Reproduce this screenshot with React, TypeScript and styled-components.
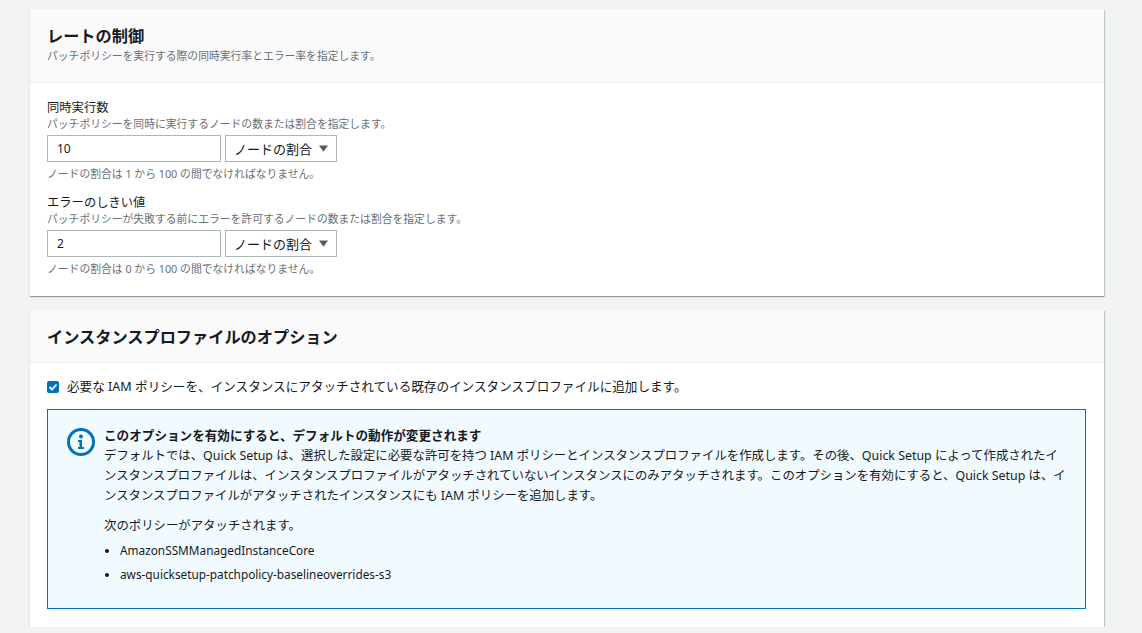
import React from "react";
import styled, { createGlobalStyle } from "styled-components";

const Global = createGlobalStyle`
  body { margin: 0; background: #f2f3f3; font-family: "Noto Sans", "Noto Sans CJK JP", sans-serif; color: #16191f; }
`;
const Page = styled.div`padding: 9px 38px 0 30px; display: flex; flex-direction: column; gap: 14px;`;
const Card = styled.div`background: #fff; box-shadow: 0 1px 1px rgba(0,28,36,.3), 1px 1px 1px rgba(0,28,36,.15);`;
const Header = styled.div<{ $h: number }>`
  background: #fafafa; border-bottom: 1px solid #eaeded; height: ${p => p.$h}px; box-sizing: border-box;
  padding: 15px 17px 0; display: flex; flex-direction: column;
`;
const Title = styled.h2`margin: 0; font-size: 16.2px; font-weight: 700; line-height: 24px;`;
const Sub = styled.div`font-size: 10.8px; color: #687078; line-height: 16px;`;
const Body = styled.div<{ $pad: string }>`padding: ${p => p.$pad}; display: flex; flex-direction: column;`;
const Label = styled.div`font-size: 12.3px; line-height: 16px;`;
const Desc = styled.div`font-size: 10.8px; color: #687078; line-height: 16px;`;
const Row = styled.div`display: flex; gap: 4px; margin: 3px 0 4px;`;
const Input = styled.div`width: 174px; height: 27px; box-sizing: border-box; border: 1px solid #aab7b8; font-size: 12px; padding: 0 9px; display: flex; align-items: center;`;
const Select = styled.div`width: 112px; height: 27px; box-sizing: border-box; border: 1px solid #aab7b8; font-size: 13px; padding: 0 8px; display: flex; align-items: center; gap: 7px; white-space: nowrap; color: #16191f;`;
const Field = styled.div`display: flex; flex-direction: column; & + & { margin-top: 13px; }`;
const Check = styled.label`display: flex; align-items: center; gap: 8px; font-size: 12.6px; line-height: 20px;`;
const Box = styled.span`width: 12px; height: 12px; border-radius: 2px; background: #0073bb; display: inline-flex; align-items: center; justify-content: center;`;
const Info = styled.div`margin-top: 12px; border: 1px solid #0073bb; background: #f1faff; padding: 16px 18px 22px; display: flex; gap: 8px;`;
const IText = styled.div`font-size: 12.4px; line-height: 20px; flex: 1;`;
const ITitle = styled.div`font-weight: 700; font-size: 12.6px;`;
const List = styled.ul`margin: 2px 0 0; padding-left: 16px; li { line-height: 24px; font-size: 11.8px; }`;

const Field1 = ({ label, desc, value, hint }: { label: string; desc: string; value: string; hint: string }) => (
  <Field>
    <Label>{label}</Label>
    <Desc>{desc}</Desc>
    <Row>
      <Input>{value}</Input>
      <Select>ノードの割合 <svg width="10" height="8" viewBox="0 0 10 8"><path d="M0 0h10L5 7z" fill="#545b64" /></svg></Select>
    </Row>
    <Desc>{hint}</Desc>
  </Field>
);

export default function App() {
  return (
    <>
      <Global />
      <Page>
        <Card>
          <Header $h={74}>
            <Title>レートの制御</Title>
            <Sub>パッチポリシーを実行する際の同時実行率とエラー率を指定します。</Sub>
          </Header>
          <Body $pad="17px 17px 19px">
            <Field1 label="同時実行数" desc="パッチポリシーを同時に実行するノードの数または割合を指定します。" value="10" hint="ノードの割合は 1 から 100 の間でなければなりません。" />
            <Field1 label="エラーのしきい値" desc="パッチポリシーが失敗する前にエラーを許可するノードの数または割合を指定します。" value="2" hint="ノードの割合は 0 から 100 の間でなければなりません。" />
          </Body>
        </Card>
        <Card>
          <Header $h={53}>
            <Title>インスタンスプロファイルのオプション</Title>
          </Header>
          <Body $pad="14px 18px 18px 17px">
            <Check>
              <Box><svg width="10" height="10" viewBox="0 0 10 10"><path d="M1.5 5l2.5 2.5 4.5-5" stroke="#fff" strokeWidth="1.8" fill="none" /></svg></Box>
              必要な IAM ポリシーを、インスタンスにアタッチされている既存のインスタンスプロファイルに追加します。
            </Check>
            <Info>
              <svg width="30" height="30" viewBox="0 0 30 30" style={{ flexShrink: 0, marginTop: 1 }}>
                <circle cx="15" cy="15" r="12.5" fill="none" stroke="#0073bb" strokeWidth="3" />
                <circle cx="15" cy="9.5" r="2" fill="#0073bb" />
                <path d="M12 13h4v7h2v2h-6v-2h1.5v-5H12z" fill="#0073bb" />
              </svg>
              <IText>
                <ITitle>このオプションを有効にすると、デフォルトの動作が変更されます</ITitle>
                <div>デフォルトでは、Quick Setup は、選択した設定に必要な許可を持つ IAM ポリシーとインスタンスプロファイルを作成します。その後、Quick Setup によって作成されたインスタンスプロファイルは、インスタンスプロファイルがアタッチされていないインスタンスにのみアタッチされます。このオプションを有効にすると、Quick Setup は、インスタンスプロファイルがアタッチされたインスタンスにも IAM ポリシーを追加します。</div>
                <div style={{ marginTop: 10 }}>次のポリシーがアタッチされます。</div>
                <List>
                  <li>AmazonSSMManagedInstanceCore</li>
                  <li>aws-quicksetup-patchpolicy-baselineoverrides-s3</li>
                </List>
              </IText>
            </Info>
          </Body>
        </Card>
      </Page>
    </>
  );
}
